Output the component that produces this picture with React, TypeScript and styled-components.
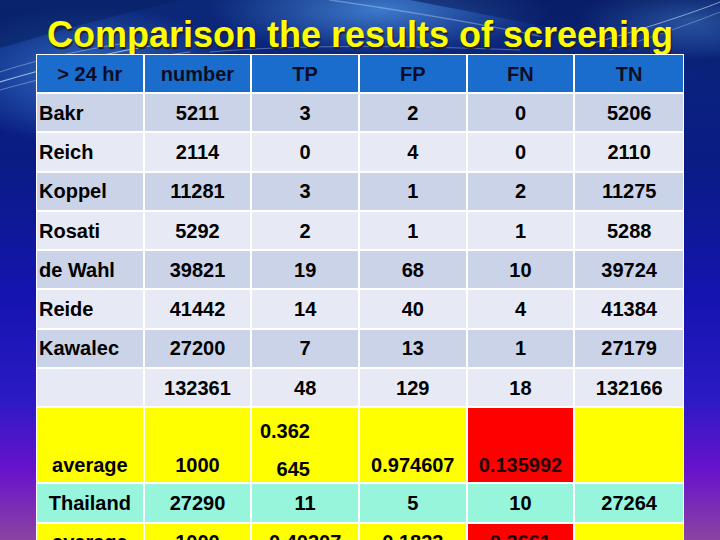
import styled, { createGlobalStyle } from "styled-components";

type Tone = "head" | "dark" | "light" | "yellow" | "aqua";
type Align = "middle" | "bottom" | "top";

const tones: Record<Tone, string> = {
  head: "#1a6dcc",
  dark: "#cbd3e9",
  light: "#e7eaf5",
  yellow: "#ffff00",
  aqua: "#97f5dc",
};

const studies = [
  ["Bakr", "5211", "3", "2", "0", "5206"],
  ["Reich", "2114", "0", "4", "0", "2110"],
  ["Koppel", "11281", "3", "1", "2", "11275"],
  ["Rosati", "5292", "2", "1", "1", "5288"],
  ["de Wahl", "39821", "19", "68", "10", "39724"],
  ["Reide", "41442", "14", "40", "4", "41384"],
  ["Kawalec", "27200", "7", "13", "1", "27179"],
];

const GlobalStyle = createGlobalStyle`
  html, body {
    margin: 0;
    padding: 0;
    background: #0a1a80;
  }
  body {
    font-family: "Liberation Sans", Arial, sans-serif;
  }
`;

const Page = styled.div`
  position: relative;
  width: 720px;
  height: 540px;
  overflow: hidden;
  background: linear-gradient(
    to bottom,
    #0b2878 0%,
    #0a1c84 30%,
    #1414b0 55%,
    #2c1ac4 74%,
    #6812cc 87%,
    #8c44a0 100%
  );
`;

const Backdrop = styled.svg`
  position: absolute;
  inset: 0;
  z-index: 0;
`;

const Content = styled.div`
  position: relative;
  z-index: 1;
  display: flex;
  flex-direction: column;
  align-items: center;
`;

const Title = styled.h1`
  margin: 17px 0 1px;
  font-size: 36px;
  line-height: 36px;
  font-weight: 700;
  color: #ffff00;
  text-shadow: 1px 2px 1px #1c1c30;
  white-space: nowrap;
`;

const Table = styled.table`
  width: 648px;
  table-layout: fixed;
  border-collapse: separate;
  border-spacing: 0;
  border: 1px solid #fff;
  border-bottom: none;
  font-size: 20px;
  font-weight: 700;
  line-height: 24px;
  color: #000;
`;

const Row = styled.tr<{ $tone: Tone; $h: number; $align?: Align }>`
  height: ${(p) => p.$h}px;
  background: ${(p) => tones[p.$tone]};
  color: ${(p) => (p.$tone === "head" ? "#0d0d26" : "#000")};

  & > td {
    vertical-align: ${(p) => p.$align ?? "middle"};
    padding-bottom: ${(p) => (p.$align === "bottom" ? 5 : 0)}px;
    padding-top: ${(p) => (p.$align === "top" ? 6 : 0)}px;
  }
`;

const Cell = styled.td<{ $left?: boolean; $fill?: string }>`
  padding: 0;
  padding-left: ${(p) => (p.$left ? 2 : 0)}px;
  text-align: ${(p) => (p.$left ? "left" : "center")};
  background: ${(p) => p.$fill ?? "transparent"};
  border-right: 2px solid #fff;
  border-bottom: 2px solid #fff;
  white-space: nowrap;
  overflow: hidden;

  &:last-child {
    border-right: none;
  }
`;

const SplitCell = styled(Cell)`
  && {
    vertical-align: top;
    padding-top: 4px;
    padding-bottom: 0;
  }
  text-align: right;
  padding-right: 48px;
`;

const SplitText = styled.div`
  height: 68px;
  line-height: 38px;
`;

const RedText = styled.span`
  color: #1e0000;
`;

const Backgroundart = () => (
  <Backdrop width="720" height="540" viewBox="0 0 720 540">
    <defs>
      <radialGradient id="glowLeft" cx="0.5" cy="0.5" r="0.5">
        <stop offset="0" stopColor="#3f86dc" stopOpacity="0.75" />
        <stop offset="1" stopColor="#3f86dc" stopOpacity="0" />
      </radialGradient>
      <radialGradient id="glowTop" cx="0.5" cy="0.5" r="0.5">
        <stop offset="0" stopColor="#4a8ee0" stopOpacity="0.8" />
        <stop offset="1" stopColor="#4a8ee0" stopOpacity="0" />
      </radialGradient>
      <linearGradient id="dark" x1="0" y1="0" x2="0" y2="1">
        <stop offset="0" stopColor="#061457" stopOpacity="0.9" />
        <stop offset="1" stopColor="#061457" stopOpacity="0" />
      </linearGradient>
    </defs>
    <ellipse cx="90" cy="75" rx="150" ry="70" fill="url(#glowLeft)" />
    <ellipse cx="380" cy="10" rx="170" ry="45" fill="url(#glowTop)" />
    <ellipse cx="690" cy="20" rx="110" ry="40" fill="url(#glowTop)" />
    <path
      d="M410 0 C470 12 540 24 600 40 C650 54 690 70 720 80 L720 0 Z"
      fill="url(#dark)"
      opacity="0.6"
    />
    <path d="M0 0 L180 0 C120 14 60 30 0 48 Z" fill="#082060" opacity="0.55" />
    <g fill="none" stroke="#cfe4ff" strokeLinecap="round">
      <path d="M0 82 C40 70 90 56 150 46" strokeWidth="1.2" opacity="0.7" />
      <path d="M0 90 C50 76 110 62 190 52" strokeWidth="0.8" opacity="0.5" />
      <path d="M0 72 C30 62 70 52 120 44" strokeWidth="0.8" opacity="0.5" />
      <path d="M210 52 C300 44 420 46 520 50" strokeWidth="1" opacity="0.35" />
      <path d="M590 44 C640 30 690 14 720 2" strokeWidth="1" opacity="0.6" />
      <path d="M610 50 C650 38 690 24 720 12" strokeWidth="0.8" opacity="0.45" />
      <path d="M330 0 C400 10 470 22 540 36" strokeWidth="1.4" opacity="0.35" />
    </g>
  </Backdrop>
);

const App = () => {
  return (
    <Page>
      <GlobalStyle />
      <Backgroundart />
      <Content>
        <Title>Comparison the results of screening</Title>
        <Table>
          <tbody>
            <Row $tone="head" $h={39}>
              <Cell>&gt; 24 hr</Cell>
              <Cell>number</Cell>
              <Cell>TP</Cell>
              <Cell>FP</Cell>
              <Cell>FN</Cell>
              <Cell>TN</Cell>
            </Row>
            {studies.map((row, i) => (
              <Row key={row[0]} $tone={i % 2 === 0 ? "dark" : "light"} $h={39.3}>
                {row.map((value, j) => (
                  <Cell key={j} $left={j === 0}>
                    {value}
                  </Cell>
                ))}
              </Row>
            ))}
            <Row $tone="light" $h={39.3}>
              <Cell />
              <Cell>132361</Cell>
              <Cell>48</Cell>
              <Cell>129</Cell>
              <Cell>18</Cell>
              <Cell>132166</Cell>
            </Row>
            <Row $tone="yellow" $h={76} $align="bottom">
              <Cell>average</Cell>
              <Cell>1000</Cell>
              <SplitCell>
                <SplitText>
                  0.362
                  <br />
                  645
                </SplitText>
              </SplitCell>
              <Cell>0.974607</Cell>
              <Cell $fill="#ff0000">
                <RedText>0.135992</RedText>
              </Cell>
              <Cell />
            </Row>
            <Row $tone="aqua" $h={39.3}>
              <Cell>Thailand</Cell>
              <Cell>27290</Cell>
              <Cell>11</Cell>
              <Cell>5</Cell>
              <Cell>10</Cell>
              <Cell>27264</Cell>
            </Row>
            <Row $tone="yellow" $h={60} $align="top">
              <Cell>average</Cell>
              <Cell>1000</Cell>
              <Cell>0.40307</Cell>
              <Cell>0.1833</Cell>
              <Cell $fill="#ff0000">
                <RedText>0.3661</RedText>
              </Cell>
              <Cell />
            </Row>
          </tbody>
        </Table>
      </Content>
    </Page>
  );
};

export default App;
